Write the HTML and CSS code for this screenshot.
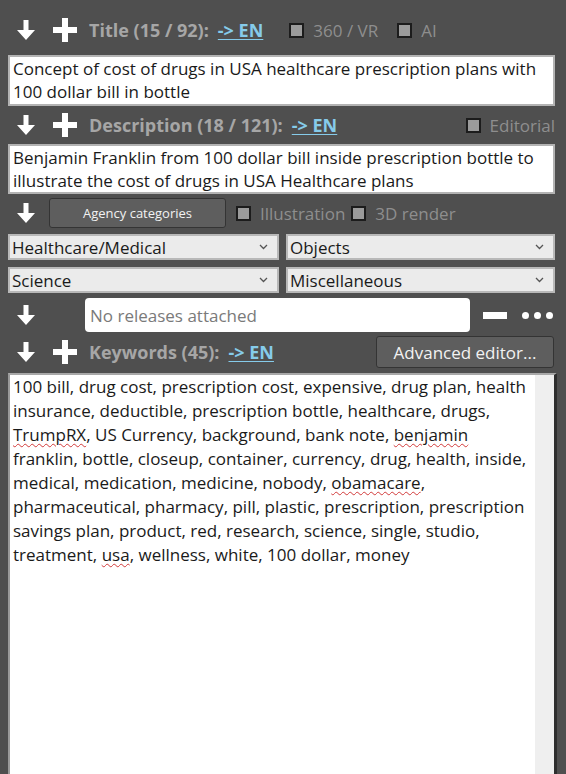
FILE: index.html
```html
<!DOCTYPE html>
<html>
<head>
<meta charset="utf-8">
<link rel="stylesheet" href="styles.css">
</head>
<body>
<div class="panel">
  <div class="row row1">
    <span class="ic-arrow"><svg width="18" height="20" viewBox="0 0 18 20"><path d="M6.5 0h5v10h6.5L9 20 0 10h6.5z" fill="#fff"/></svg></span>
    <span class="ic-plus"><svg width="24" height="24" viewBox="0 0 24 24"><path d="M9 0h6v9h9v6h-9v9H9v-9H0V9h9z" fill="#fff"/></svg></span>
    <span class="label">Title (15 / 92):</span>
    <span class="link">-&gt; EN</span>
    <span class="check ck-360"><span class="box"></span>360 / VR</span>
    <span class="check ck-ai"><span class="box"></span>AI</span>
  </div>
  <div class="textbox tb-title">Concept of cost of drugs in USA healthcare prescription plans with 100 dollar bill in bottle</div>
  <div class="row row2">
    <span class="ic-arrow"><svg width="18" height="20" viewBox="0 0 18 20"><path d="M6.5 0h5v10h6.5L9 20 0 10h6.5z" fill="#fff"/></svg></span>
    <span class="ic-plus"><svg width="24" height="24" viewBox="0 0 24 24"><path d="M9 0h6v9h9v6h-9v9H9v-9H0V9h9z" fill="#fff"/></svg></span>
    <span class="label">Description (18 / 121):</span>
    <span class="link">-&gt; EN</span>
    <span class="check ck-ed"><span class="box"></span>Editorial</span>
  </div>
  <div class="textbox tb-desc">Benjamin Franklin from 100 dollar bill inside prescription bottle to illustrate the cost of drugs in USA Healthcare plans</div>
  <div class="row row3">
    <span class="ic-arrow"><svg width="18" height="20" viewBox="0 0 18 20"><path d="M6.5 0h5v10h6.5L9 20 0 10h6.5z" fill="#fff"/></svg></span>
    <span class="btn btn-agency">Agency categories</span>
    <span class="check ck-ill"><span class="box"></span>Illustration</span>
    <span class="check ck-3d"><span class="box"></span>3D render</span>
  </div>
  <div class="ddrow">
    <div class="dd"><span>Healthcare/Medical</span><svg class="chev" width="9" height="6" viewBox="0 0 9 6"><path d="M1 1l3.5 3.5L8 1" stroke="#555" stroke-width="1.3" fill="none"/></svg></div>
    <div class="dd"><span>Objects</span><svg class="chev" width="9" height="6" viewBox="0 0 9 6"><path d="M1 1l3.5 3.5L8 1" stroke="#555" stroke-width="1.3" fill="none"/></svg></div>
  </div>
  <div class="ddrow ddrow2">
    <div class="dd"><span>Science</span><svg class="chev" width="9" height="6" viewBox="0 0 9 6"><path d="M1 1l3.5 3.5L8 1" stroke="#555" stroke-width="1.3" fill="none"/></svg></div>
    <div class="dd"><span>Miscellaneous</span><svg class="chev" width="9" height="6" viewBox="0 0 9 6"><path d="M1 1l3.5 3.5L8 1" stroke="#555" stroke-width="1.3" fill="none"/></svg></div>
  </div>
  <div class="row row4">
    <span class="ic-arrow"><svg width="18" height="20" viewBox="0 0 18 20"><path d="M6.5 0h5v10h6.5L9 20 0 10h6.5z" fill="#fff"/></svg></span>
    <div class="releases">No releases attached</div>
    <span class="minus"></span>
    <span class="dots"><i></i><i></i><i></i></span>
  </div>
  <div class="row row5">
    <span class="ic-arrow"><svg width="18" height="20" viewBox="0 0 18 20"><path d="M6.5 0h5v10h6.5L9 20 0 10h6.5z" fill="#fff"/></svg></span>
    <span class="ic-plus"><svg width="24" height="24" viewBox="0 0 24 24"><path d="M9 0h6v9h9v6h-9v9H9v-9H0V9h9z" fill="#fff"/></svg></span>
    <span class="label">Keywords (45):</span>
    <span class="link">-&gt; EN</span>
    <span class="btn btn-adv">Advanced editor...</span>
  </div>
  <div class="kwbox">
    <div class="kwtext">100 bill, drug cost, prescription cost, expensive, drug plan, health insurance, deductible, prescription bottle, healthcare, drugs, <span class="sp">TrumpRX</span>, US Currency, background, bank note, <span class="sp">benjamin</span> franklin, bottle, closeup, container, currency, drug, health, inside, medical, medication, medicine, nobody, <span class="sp">obamacare</span>, pharmaceutical, pharmacy, pill, plastic, prescription, prescription savings plan, product, red, research, science, single, studio, treatment, <span class="sp">usa</span>, wellness, white, 100 dollar, money</div>
    <div class="scroll"></div>
  </div>
</div>
</body>
</html>
```
FILE: styles.css
```css
html, body {
  margin: 0;
  padding: 0;
  background: #4f4f4f;
  height: 100%;
  overflow: hidden;
}
.panel {
  padding: 15px 11px 0 8px;
  font-family: "Open Sans", "Noto Sans", sans-serif;
  color: #1a1a1a;
}
.row {
  display: flex;
  align-items: center;
}
.row1 { height: 30px; margin-bottom: 10px; }
.row2 { height: 38px; }
.row3 { height: 30px; margin-top: 4px; }
.row4 { height: 34px; margin-top: 5px; }
.row5 { height: 32px; margin-top: 4px; }
.ic-arrow {
  display: flex;
  margin-left: 9px;
  width: 18px;
}
.ic-plus {
  display: flex;
  margin-left: 18px;
}
.label {
  margin-left: 12px;
  font-weight: 700;
  font-size: 18px;
  color: #a6a6a6;
}
.link {
  margin-left: 9px;
  font-weight: 700;
  font-size: 18px;
  color: #86cbea;
  text-decoration: underline;
  text-underline-offset: 2px;
}
.check {
  display: flex;
  align-items: center;
  font-size: 17px;
  color: #8e8e8e;
}
.check .box {
  width: 11px;
  height: 11px;
  background: #9b9b9b;
  border: 2px solid #1c1c1c;
  margin-right: 9px;
}
.ck-360 { margin-left: 26px; }
.ck-ai { margin-left: 19px; }
.ck-ed { margin-left: auto; }
.ck-ill { margin-left: 10px; }
.ck-3d { margin-left: 6px; }
.textbox {
  background: #fff;
  border: 2px solid #b3b3b3;
  font-size: 17px;
  line-height: 23px;
  padding: 0 3px;
  box-sizing: border-box;
}
.tb-title { height: 51px; }
.tb-desc { height: 50px; }
.btn {
  display: flex;
  align-items: center;
  justify-content: center;
  background: #5e5e5e;
  border: 1px solid #343434;
  border-radius: 3px;
  color: #f2f2f2;
  box-sizing: border-box;
}
.btn-agency {
  margin-left: 14px;
  width: 177px;
  height: 30px;
  font-size: 13px;
}
.btn-adv {
  margin-left: auto;
  width: 178px;
  height: 32px;
  font-size: 17px;
  margin-right: 1px;
}
.ddrow {
  display: flex;
  gap: 7px;
  margin-top: 6px;
}
.ddrow2 { margin-top: 7px; }
.dd {
  flex: 1;
  height: 26px;
  box-sizing: border-box;
  background: #ebebeb;
  border: 2px solid #b8b8b8;
  display: flex;
  align-items: center;
  justify-content: space-between;
  padding: 0 9px 0 2px;
  font-size: 17px;
}
.dd:first-child { flex: 0 0 271px; }
.releases {
  margin-left: 50px;
  width: 385px;
  height: 34px;
  box-sizing: border-box;
  background: #fff;
  border-radius: 4px;
  display: flex;
  align-items: center;
  padding-left: 5px;
  font-size: 17px;
  color: #7a7a7a;
}
.minus {
  margin-left: 13px;
  width: 24px;
  height: 7px;
  background: #fff;
}
.dots {
  display: flex;
  gap: 5px;
  margin-left: 15px;
}
.dots i {
  width: 7px;
  height: 7px;
  border-radius: 50%;
  background: #fff;
}
.kwbox {
  margin-top: 5px;
  height: 420px;
  display: flex;
  background: #fff;
  border-left: 2px solid #9a9a9a;
  border-top: 2px solid #a8a8a8;
  border-right: 3px solid #2e2e2e;
  margin-right: -2px;
}
.kwtext {
  flex: 1;
  padding: 0 4px 0 3px;
  font-size: 17px;
  line-height: 24px;
}
.scroll {
  width: 19px;
  background: #efefef;
}
.sp {
  text-decoration: underline wavy #d23a3a;
  text-decoration-thickness: 1px;
  text-underline-offset: 2px;
}
```
